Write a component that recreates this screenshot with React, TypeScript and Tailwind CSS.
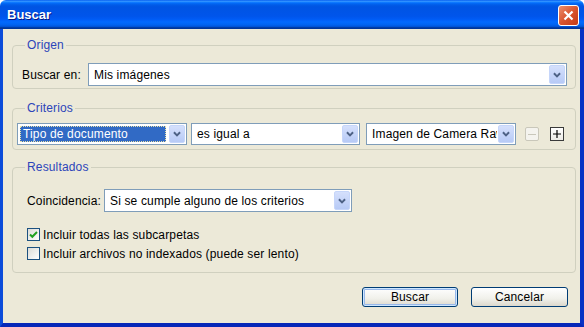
import React from "react";

function Chevron() {
  return (
    <svg width="16" height="16" viewBox="0 0 16 16">
      <path d="M4.5 6 L8 9.5 L11.5 6" fill="none" stroke="#4D6185" strokeWidth="2.2" />
    </svg>
  );
}

function DropBtn() {
  return (
    <div className="m-[1px] flex w-[16px] shrink-0 items-center justify-center rounded-[2px] border border-[#C6D6FA] bg-[linear-gradient(#D5E0FC,#B7CAF6)]">
      <Chevron />
    </div>
  );
}

function Combo({ text, className, selected }: { text: string; className: string; selected?: boolean }) {
  return (
    <div className={`flex items-stretch border border-[#7F9DB9] bg-white ${className}`}>
      <div className="flex min-w-0 flex-1 items-center overflow-hidden p-[2px]">
        {selected ? (
          <span className="flex h-full w-full items-center whitespace-nowrap border border-dotted border-[#E8E0A8] bg-[#316AC5] pl-[2px] text-white">
            {text}
          </span>
        ) : (
          <span className="whitespace-nowrap pl-[3px] text-black">{text}</span>
        )}
      </div>
      <DropBtn />
    </div>
  );
}

function Check({ checked }: { checked?: boolean }) {
  return (
    <div className="flex h-[13px] w-[13px] items-center justify-center border border-[#1C5180] bg-[linear-gradient(135deg,#DCDCD7,#FFFFFF)]">
      {checked && (
        <svg width="11" height="11" viewBox="0 0 11 11">
          <path d="M2 5.5 L4.3 7.8 L9 3" fill="none" stroke="#21A121" strokeWidth="2" />
        </svg>
      )}
    </div>
  );
}

function Group({ title, className, children }: { title: string; className: string; children: React.ReactNode }) {
  return (
    <fieldset className={`ml-[9px] mr-[4px] rounded-[4px] border border-[#D0D0BF] ${className}`}>
      <legend className="ml-[12px] px-[2px] leading-[14px] text-[#2C45BA]">{title}</legend>
      {children}
    </fieldset>
  );
}

export default function App() {
  return (
    <div className="flex h-[327px] w-[584px] flex-col font-['Liberation_Sans',Arial,sans-serif] text-[12px] tracking-[0.15px] text-black">
      {/* barra de título */}
      <div className="flex h-[29px] items-center justify-between rounded-t-[6px] bg-[linear-gradient(#0058EE_0%,#3593FF_4%,#288EFF_6%,#127DFF_8%,#036FFC_10%,#0262EE_14%,#0057E5_20%,#0054E3_24%,#0055EB_56%,#005BF5_66%,#026AFE_76%,#0062EF_86%,#0052D6_92%,#0040AB_94%,#003092_100%)] pl-[7px] pr-[5px] pt-[1px]">
        <span className="text-[13px] font-bold tracking-normal text-white [text-shadow:1px_1px_#0A1883]">Buscar</span>
        <div className="flex h-[21px] w-[21px] items-center justify-center rounded-[3px] border border-white bg-[linear-gradient(135deg,#EC8F6E,#D9552F_50%,#C23A16)]">
          <svg width="13" height="13" viewBox="0 0 13 13">
            <path d="M2.5 2.5 L10.5 10.5 M10.5 2.5 L2.5 10.5" stroke="white" strokeWidth="2.2" />
          </svg>
        </div>
      </div>

      <div className="flex flex-1 flex-col border-b-[4px] border-l-[3px] border-r-[4px] border-b-[#0627B8] border-l-[#0B4CDA] border-r-[#0831C4] bg-[#ECE9D8]">
        <Group title="Origen" className="mt-[9px]">
          <div className="flex items-center pb-[2px] pl-[9px] pr-[8px] pt-[11px]">
            <span className="w-[66px]">Buscar en:</span>
            <Combo text="Mis imágenes" className="h-[23px] flex-1" />
          </div>
        </Group>

        <Group title="Criterios" className="mt-[12px]">
          <div className="flex items-center pb-[4px] pl-[4px] pt-[8px]">
            <Combo text="Tipo de documento" className="h-[22px] w-[170px]" selected />
            <Combo text="es igual a" className="ml-[4px] h-[22px] w-[169px]" />
            <Combo text="Imagen de Camera Raw" className="ml-[6px] h-[22px] w-[150px]" />
            <div className="ml-[9px] flex h-[14px] w-[14px] items-center justify-center rounded-[2px] border border-[#C9C7BA] bg-[#F4F3EE]">
              <div className="h-[1px] w-[8px] bg-[#C9C7BA]" />
            </div>
            <div className="ml-[11px] flex h-[14px] w-[14px] items-center justify-center border border-[#3A3A3A] bg-[linear-gradient(#FFFFFF,#ECEBE6)]">
              <svg width="10" height="10" viewBox="0 0 10 10">
                <path d="M5 1 V9 M1 5 H9" stroke="black" strokeWidth="1.2" />
              </svg>
            </div>
          </div>
        </Group>

        <Group title="Resultados" className="mt-[10px]">
          <div className="flex flex-col pb-[12px] pl-[14px] pt-[15px]">
            <div className="flex items-center">
              <span className="w-[77px]">Coincidencia:</span>
              <Combo text="Si se cumple alguno de los criterios" className="h-[23px] w-[248px]" />
            </div>
            <div className="mt-[16px] flex h-[13px] items-center gap-[3px]">
              <Check checked />
              <span>Incluir todas las subcarpetas</span>
            </div>
            <div className="mt-[6px] flex h-[13px] items-center gap-[3px]">
              <Check />
              <span>Incluir archivos no indexados (puede ser lento)</span>
            </div>
          </div>
        </Group>

        <div className="mt-[14px] flex justify-end gap-[13px] pr-[12px]">
          <button className="h-[20px] w-[96px] rounded-[3px] border border-[#003C74] bg-[linear-gradient(#FFFFFF,#F0F0EA_60%,#DCD8CC)] shadow-[inset_0_0_0_1px_#CEE7FF,inset_0_0_0_2px_#98B8EA]">
            Buscar
          </button>
          <button className="h-[20px] w-[97px] rounded-[3px] border border-[#003C74] bg-[linear-gradient(#FFFFFF,#F0F0EA_60%,#DCD8CC)]">
            Cancelar
          </button>
        </div>
      </div>
    </div>
  );
}
